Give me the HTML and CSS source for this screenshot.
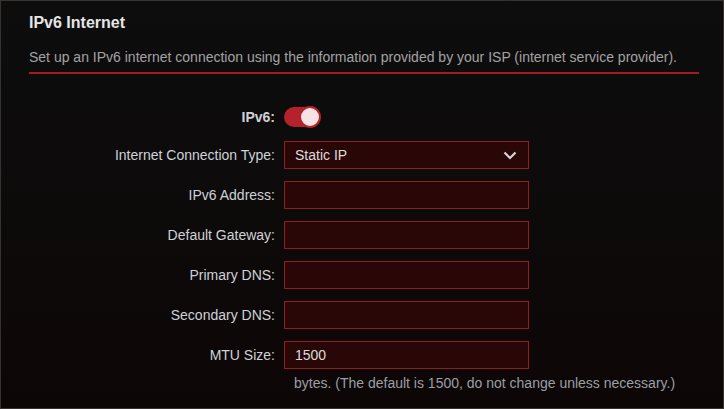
FILE: index.html
```html
<!DOCTYPE html>
<html>
<head>
<meta charset="utf-8">
<link rel="stylesheet" href="styles.css">
</head>
<body>
<div class="panel">
  <h1 class="title">IPv6 Internet</h1>
  <p class="desc">Set up an IPv6 internet connection using the information provided by your ISP (internet service provider).</p>
  <div class="form">
    <div class="row row-toggle">
      <label class="label label-bold">IPv6:</label>
      <div class="toggle"><span class="knob"></span></div>
    </div>
    <div class="row">
      <label class="label">Internet Connection Type:</label>
      <div class="field select">
        <span>Static IP</span>
        <svg class="chev" width="14" height="9" viewBox="0 0 14 9"><path d="M1.5 1.5 L7 7 L12.5 1.5" fill="none" stroke="#d6d6d6" stroke-width="2.2"/></svg>
      </div>
    </div>
    <div class="row">
      <label class="label">IPv6 Address:</label>
      <div class="field"></div>
    </div>
    <div class="row">
      <label class="label">Default Gateway:</label>
      <div class="field"></div>
    </div>
    <div class="row">
      <label class="label">Primary DNS:</label>
      <div class="field"></div>
    </div>
    <div class="row">
      <label class="label">Secondary DNS:</label>
      <div class="field"></div>
    </div>
    <div class="row">
      <label class="label">MTU Size:</label>
      <div class="field"><span>1500</span></div>
    </div>
    <div class="hint">bytes. (The default is 1500, do not change unless necessary.)</div>
  </div>
</div>
</body>
</html>
```

FILE: styles.css
```css
* { box-sizing: border-box; }
html, body { margin: 0; padding: 0; background: #0d0d0d; }
body { font-family: "Liberation Sans", Arial, sans-serif; }

.panel {
  width: 724px;
  height: 409px;
  border: 1px solid #37322e;
  background: linear-gradient(180deg, #0d0d0d 0%, #0d0b0b 40%, #0d0607 100%);
  padding: 12px 24px 0 28px;
  overflow: hidden;
}

.title {
  margin: 0;
  font-size: 16px;
  line-height: 20px;
  font-weight: bold;
  color: #e6e6e6;
}

.desc {
  margin: 14px 0 0 0;
  font-size: 14px;
  line-height: 20px;
  color: #a3a3a3;
  padding-bottom: 5px;
  border-bottom: 2px solid #a01c21;
}

.form {
  margin-top: 29px;
  display: flex;
  flex-direction: column;
  gap: 12px;
}

.row {
  display: flex;
  align-items: center;
  height: 28px;
  gap: 9px;
}
.row-toggle { margin-bottom: -2px; }

.label {
  width: 246px;
  text-align: right;
  font-size: 14px;
  color: #cfd2d6;
}
.label-bold { font-weight: bold; }

.toggle {
  position: relative;
  width: 36px;
  height: 20px;
  border-radius: 10px;
  background: #b4232b;
}
.knob {
  position: absolute;
  right: -1px;
  top: -1px;
  width: 22px;
  height: 22px;
  border-radius: 50%;
  background: #f7e3e6;
  border: 2px solid #b4232b;
}

.field {
  width: 245px;
  height: 28px;
  background: #2a0707;
  border: 1px solid #931c22;
  display: flex;
  align-items: center;
  padding: 0 10px;
  font-size: 14px;
  color: #dcdcdc;
}
.select { justify-content: space-between; padding-right: 11px; }
.chev { display: block; }

.hint {
  margin-top: -8px;
  padding-left: 265px;
  font-size: 14px;
  line-height: 20px;
  color: #9c9fa3;
}
```
